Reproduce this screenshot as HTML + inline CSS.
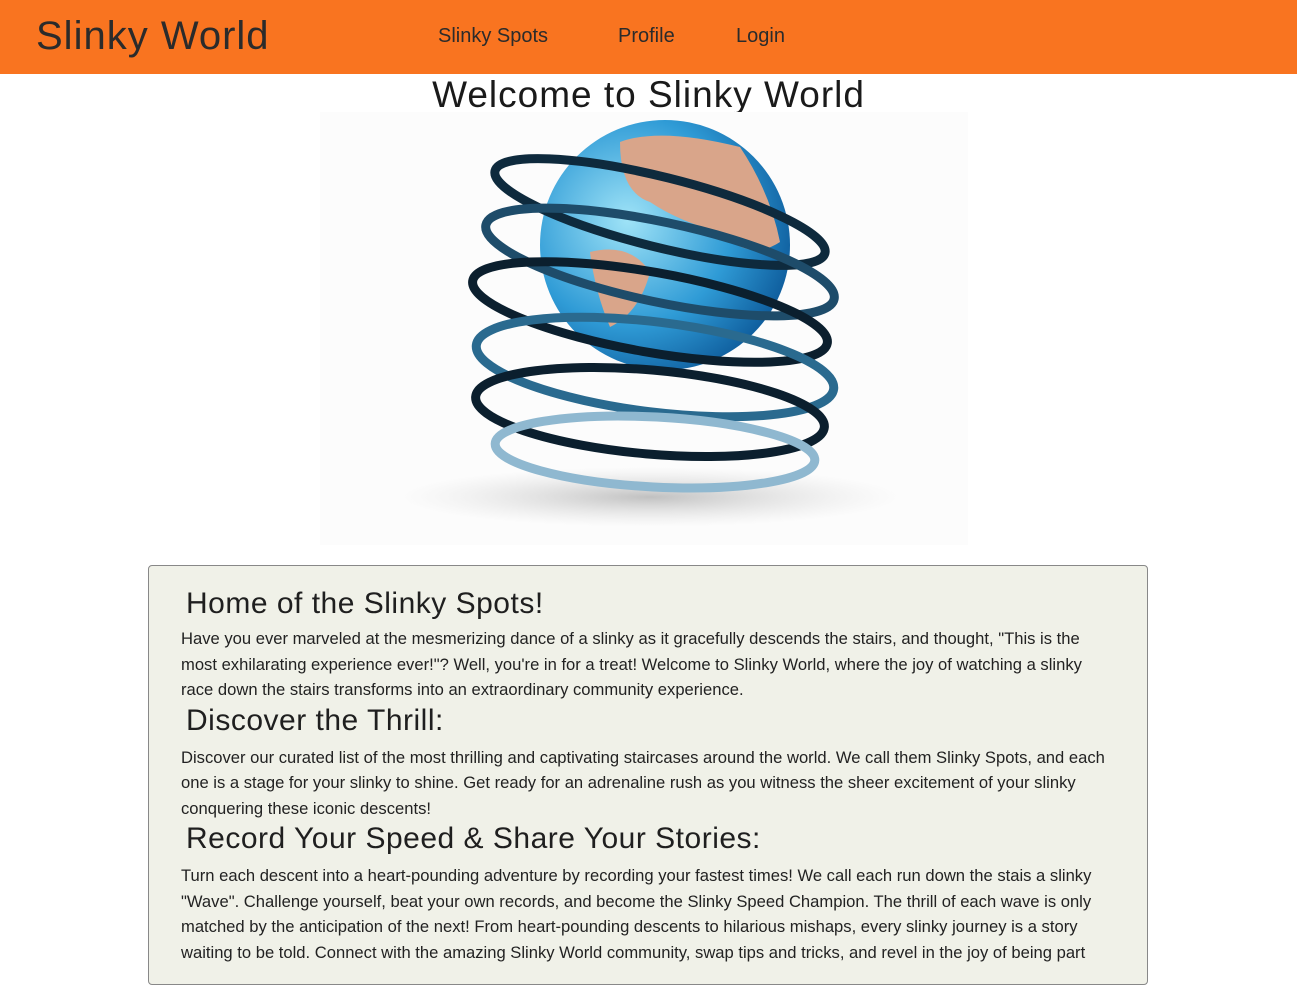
<!DOCTYPE html>
<html><head><meta charset="utf-8"><style>
*{margin:0;padding:0;box-sizing:border-box}
body{width:1297px;height:966px;overflow:hidden;background:#fff;font-family:"Liberation Sans",sans-serif;color:#212529}
.nav{height:74px;background:#f97420;position:relative;color:#2b2b2b}
.brand{position:absolute;left:36px;top:14px;font-size:40px;letter-spacing:1px}
.nav a{position:absolute;top:25px;font-size:20px}
h1{position:absolute;top:74px;width:100%;text-align:center;font-size:37px;font-weight:normal;letter-spacing:1px;color:#1a1a1a}
.img{position:absolute;left:320px;top:112px;width:648px;height:433px;background:#fcfcfc}
.panel{position:absolute;left:148px;top:565px;width:1000px;height:420px;background:#f0f1e8;border:1px solid #888;border-radius:4px}
h2{font-weight:normal;font-size:30px;line-height:36px;margin-left:37px;color:#1f1f1f;letter-spacing:.5px;white-space:nowrap}
p{font-size:16.6px;line-height:25.5px;margin-left:32px;white-space:nowrap;color:#222}
</style></head><body>
<div class="nav"><div class="brand">Slinky World</div>
<a style="left:438px">Slinky Spots</a><a style="left:618px">Profile</a><a style="left:736px">Login</a></div>
<h1>Welcome to Slinky World</h1>
<div class="img"><svg width="648" height="433" viewBox="0 0 648 433">
<defs><radialGradient id="g" cx="35%" cy="40%" r="70%"><stop offset="0" stop-color="#9fe3f7"/><stop offset=".6" stop-color="#2f9bd6"/><stop offset="1" stop-color="#0d5a9a"/></radialGradient>
<radialGradient id="s" cx="50%" cy="50%" r="50%"><stop offset="0" stop-color="#999" stop-opacity=".6"/><stop offset="1" stop-color="#ccc" stop-opacity="0"/></radialGradient></defs>
<ellipse cx="330" cy="385" rx="250" ry="30" fill="url(#s)"/>
<circle cx="345" cy="133" r="125" fill="url(#g)"/>
<path d="M300 30 Q340 15 420 35 Q450 80 460 130 Q430 150 400 120 Q360 110 330 90 Q300 80 300 30Z" fill="#d9a58a"/>
<path d="M270 140 Q310 130 330 160 Q320 200 290 215 Q275 180 270 140Z" fill="#d9a58a"/>
<g fill="none" stroke-width="9">
<ellipse cx="340" cy="100" rx="170" ry="35" transform="rotate(14 340 100)" stroke="#0e2a3d"/>
<ellipse cx="340" cy="150" rx="178" ry="40" transform="rotate(12 340 150)" stroke="#1e4c6a"/>
<ellipse cx="330" cy="200" rx="180" ry="40" transform="rotate(10 330 200)" stroke="#0b1f2e"/>
<ellipse cx="335" cy="255" rx="180" ry="45" transform="rotate(7 335 255)" stroke="#2a6a8f"/>
<ellipse cx="330" cy="300" rx="175" ry="42" transform="rotate(5 330 300)" stroke="#0b1f2e"/>
<ellipse cx="335" cy="340" rx="160" ry="35" transform="rotate(3 335 340)" stroke="#8fb8d0"/>
</g></svg></div>
<div class="panel">
<h2 style="margin-top:20px">Home of the Slinky Spots!</h2>
<p style="margin-top:4px">Have you ever marveled at the mesmerizing dance of a slinky as it gracefully descends the stairs, and thought, "This is the<br>most exhilarating experience ever!"? Well, you're in for a treat! Welcome to Slinky World, where the joy of watching a slinky<br>race down the stairs transforms into an extraordinary community experience.</p>
<h2>Discover the Thrill:</h2>
<p style="margin-top:6px">Discover our curated list of the most thrilling and captivating staircases around the world. We call them Slinky Spots, and each<br>one is a stage for your slinky to shine. Get ready for an adrenaline rush as you witness the sheer excitement of your slinky<br>conquering these iconic descents!</p>
<h2>Record Your Speed &amp; Share Your Stories:</h2>
<p style="margin-top:6px">Turn each descent into a heart-pounding adventure by recording your fastest times! We call each run down the stais a slinky<br>"Wave". Challenge yourself, beat your own records, and become the Slinky Speed Champion. The thrill of each wave is only<br>matched by the anticipation of the next! From heart-pounding descents to hilarious mishaps, every slinky journey is a story<br>waiting to be told. Connect with the amazing Slinky World community, swap tips and tricks, and revel in the joy of being part</p>
</div>
</body></html>
